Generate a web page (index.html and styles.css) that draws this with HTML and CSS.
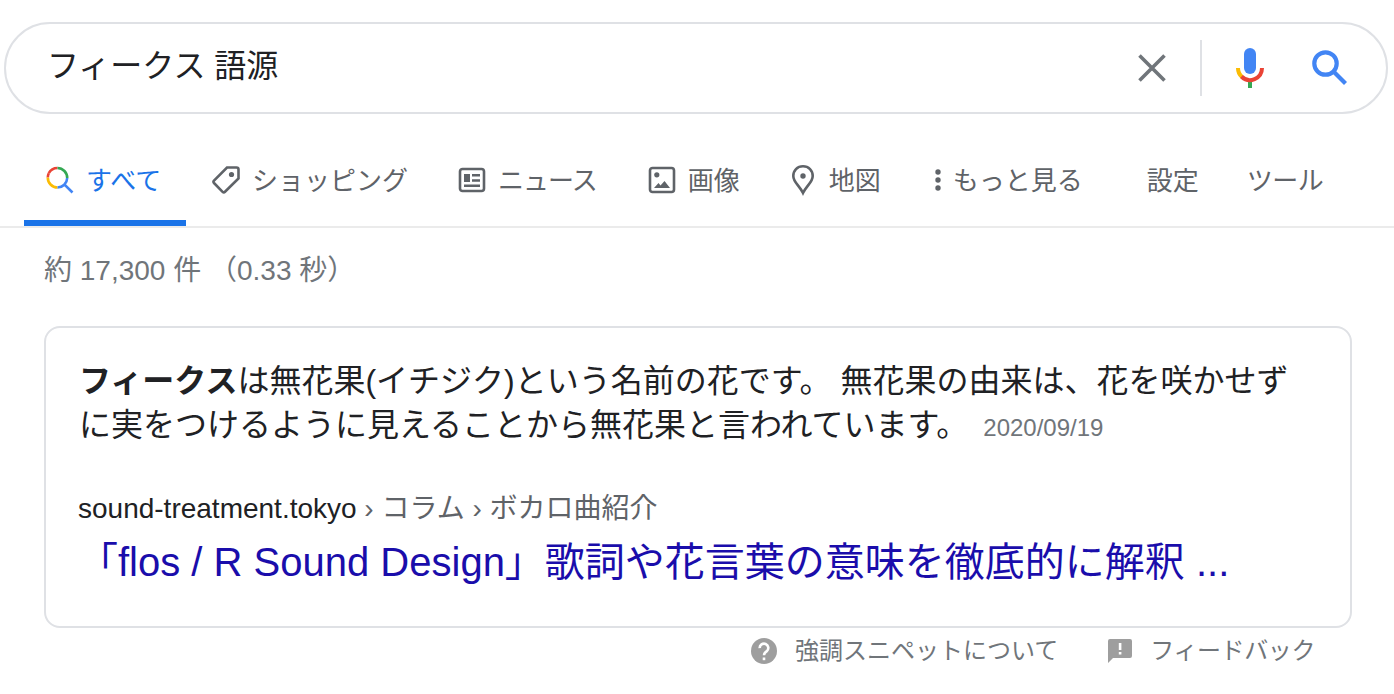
FILE: index.html
```html
<!DOCTYPE html>
<html lang="ja">
<head>
    <meta charset="UTF-8">
    <meta name="viewport" content="width=device-width, initial-scale=1.0">
    <title>フィークス 語源</title>
    <link rel="stylesheet" href="styles.css">
</head>
<body>
    <header class="search-box">
        <div class="search-query">フィークス 語源</div>
        <svg class="icon-clear" viewBox="0 0 28 28"><path d="M1.5 1.5L26.5 26.5M26.5 1.5L1.5 26.5"/></svg>
        <span class="search-divider"></span>
        <svg class="icon-mic" viewBox="0 0 28 40">
            <rect x="8" y="0" width="12" height="26" rx="6" fill="#4285f4"/>
            <path d="M12 33h4v7h-4z" fill="#34a853" stroke="none"/>
            <path d="M2 20a12 12 0 0 0 4 9" stroke="#fbbc04"/>
            <path d="M5.5 28.5A12 12 0 0 0 26 20" stroke="#ea4335"/>
        </svg>
        <svg class="icon-search" viewBox="0 0 36 36">
            <circle cx="13.5" cy="13.5" r="11.2"/>
            <path d="M22 22L33.5 33.5"/>
        </svg>
    </header>

    <nav class="tabs">
        <a class="tab active">
            <svg class="lens" viewBox="0 0 28 28">
                <path d="M2.8 7.2A9.8 9.8 0 0 1 11.5 2" stroke="#ea4335"/>
                <path d="M1.8 11.5A9.8 9.8 0 0 1 2.8 7.2" stroke="#ea4335"/>
                <path d="M11.5 21.5A9.8 9.8 0 0 1 1.8 11.5" stroke="#fbbc04"/>
                <path d="M11.5 2A9.8 9.8 0 0 1 21.2 12" stroke="#34a853"/>
                <path d="M21.2 12A9.8 9.8 0 0 1 11.5 21.5M18.3 18.3L26.5 26.5" stroke="#4285f4"/>
            </svg>
            <span>すべて</span>
        </a>
        <a class="tab tab-shopping">
            <svg viewBox="0 0 28 28">
                <path d="M15 1.5H24.5Q26.5 1.5 26.5 3.5V12.5L13 25.8Q11.8 27 10.6 25.8L2 17Q.9 15.8 2 14.6Z"/>
                <circle class="solid" cx="19.5" cy="8.5" r="2.6"/>
            </svg>
            <span>ショッピング</span>
        </a>
        <a class="tab tab-news">
            <svg viewBox="0 0 28 28">
                <rect x="2" y="3" width="24" height="22" rx="2.5"/>
                <path class="solid" d="M6 8h6v8H6zM14 8h8v2.5h-8zM14 13.2h8v2.5h-8zM6 18.5h16V21H6z"/>
            </svg>
            <span>ニュース</span>
        </a>
        <a class="tab tab-images">
            <svg viewBox="0 0 28 28">
                <rect x="2" y="2" width="24" height="24" rx="2.5"/>
                <circle class="solid" cx="8.8" cy="8.8" r="2.6"/>
                <path class="solid" d="M6 22L10.5 17L12.5 19.5L16.5 15L22 22Z"/>
            </svg>
            <span>画像</span>
        </a>
        <a class="tab tab-maps">
            <svg class="pin" viewBox="0 0 24 32">
                <path d="M12 2.3C6.2 2.3 2.3 6.6 2.3 12C2.3 18.2 8 21 12 29C16 21 21.7 18.2 21.7 12C21.7 6.6 17.8 2.3 12 2.3Z"/>
                <circle class="solid" cx="12" cy="12" r="2.7"/>
            </svg>
            <span>地図</span>
        </a>
        <a class="tab tab-more">
            <svg class="dots" viewBox="0 0 6 22">
                <circle class="solid" cx="3" cy="3" r="2.7"/>
                <circle class="solid" cx="3" cy="11" r="2.7"/>
                <circle class="solid" cx="3" cy="19" r="2.7"/>
            </svg>
            <span>もっと見る</span>
        </a>
        <a class="tab tab-settings"><span>設定</span></a>
        <a class="tab tab-tools"><span>ツール</span></a>
    </nav>

    <main class="results">
        <div class="result-stats">約 17,300 件 （0.33 秒）</div>

        <section class="snippet-card">
            <p class="snippet-text"><b>フィークス</b>は無花果(イチジク)という名前の花です。 無花果の由来は、花を咲かせず<br>に実をつけるように見えることから無花果と言われています。<span class="snippet-date">2020/09/19</span></p>
            <div class="result-url">sound-treatment.tokyo<span> › コラム › ボカロ曲紹介</span></div>
            <h3 class="result-title">「flos / R Sound Design」歌詞や花言葉の意味を徹底的に解釈 ...</h3>
        </section>

        <footer class="snippet-footer">
            <a>
                <svg class="icon-help" viewBox="0 0 26 26">
                    <circle cx="13" cy="13" r="13"/>
                    <path d="M8.7 10.2A4.3 4.3 0 1 1 15.8 13.2Q13 15 13 17.3"/>
                    <rect x="11.7" y="19.5" width="2.6" height="2.7"/>
                </svg>
                <span>強調スニペットについて</span>
            </a>
            <a>
                <svg class="icon-feedback" viewBox="0 0 24 24">
                    <path d="M2 0H22Q24 0 24 2V17Q24 19 22 19H5L0 24V2Q0 0 2 0Z"/>
                    <path class="mark" d="M10.8 4h2.6v7h-2.6zM10.8 13h2.6v2.6h-2.6z"/>
                </svg>
                <span class="feedback-label">フィードバック</span>
            </a>
        </footer>
    </main>
</body>
</html>
```
FILE: styles.css
```css
:root {
    --text: #202124;
    --muted: #5f6368;
    --light-muted: #70757a;
    --border: #dfe1e5;
    --blue: #1a73e8;
    --link: #1a0dab;
}

* {
    margin: 0;
    padding: 0;
    box-sizing: border-box;
}

body {
    background-color: #fff;
    color: var(--text);
    font-family: "Liberation Sans", "Noto Sans CJK JP", sans-serif;
    overflow: hidden;
}

svg {
    display: block;
    flex: none;
}

.search-box {
    display: flex;
    align-items: center;
    height: 92px;
    margin: 22px 6px 0 4px;
    padding: 0 38px 0 41px;
    border: 2px solid var(--border);
    border-radius: 46px;
}

.search-query {
    flex: 1;
    font-size: 32px;
    line-height: 44px;
    padding-bottom: 4px;
}

.icon-clear {
    width: 28px;
    height: 28px;
    stroke: #70757a;
    stroke-width: 3.6;
}

.search-divider {
    width: 2px;
    height: 56px;
    margin: 0 34px;
    background-color: var(--border);
}

.icon-mic {
    width: 28px;
    height: 40px;
    fill: none;
    stroke-width: 4;
}

.icon-mic rect {
    stroke: none;
}

.icon-search {
    width: 36px;
    height: 36px;
    margin-left: 48px;
    fill: none;
    stroke: #4285f4;
    stroke-width: 4.2;
}

.tabs {
    display: flex;
    height: 114px;
    padding-left: 24px;
    border-bottom: 2px solid #ebebeb;
    color: var(--muted);
    font-size: 26px;
    white-space: nowrap;
}

.tab {
    display: flex;
    align-items: center;
    gap: 12px;
    padding-top: 25px;
    border-bottom: 6px solid transparent;
}

.tab span {
    padding-bottom: 3px;
}

.tab svg {
    width: 28px;
    height: 28px;
    fill: none;
    stroke: currentColor;
    stroke-width: 2.6;
}

.tab .solid {
    fill: currentColor;
    stroke: none;
}

.tab.active {
    width: 162px;
    padding-left: 22px;
    color: var(--blue);
    border-bottom-color: var(--blue);
}

.tab-shopping {
    margin-left: 26px;
}

.tab-news {
    margin-left: 50px;
    letter-spacing: -1px;
}

.tab-images {
    margin-left: 51px;
}

.tab-maps {
    margin-left: 51px;
}

.tab svg.pin {
    width: 24px;
    height: 32px;
}

.tab.tab-maps {
    gap: 14px;
}

.tab-more {
    margin-left: 54px;
}

.tab svg.dots {
    width: 6px;
    height: 22px;
}

.tab-settings {
    margin-left: 64px;
}

.tab-tools {
    margin-left: 48px;
    letter-spacing: -0.5px;
}

.results {
    padding: 23px 42px 0 44px;
}

.result-stats {
    color: var(--light-muted);
    font-size: 28px;
    line-height: 40px;
}

.snippet-card {
    height: 302px;
    margin-top: 35px;
    padding: 31px 32px;
    border: 2px solid var(--border);
    border-radius: 16px;
    white-space: nowrap;
}

.snippet-text {
    padding-left: 1px;
    font-size: 32px;
    line-height: 44px;
}

.snippet-date {
    margin-left: 15px;
    color: var(--light-muted);
    font-size: 24px;
}

.result-url {
    margin-top: 39px;
    font-size: 28px;
    line-height: 40px;
}

.result-url span {
    color: var(--muted);
}

.result-title {
    margin-top: 7px;
    color: var(--link);
    font-size: 40px;
    font-weight: normal;
    line-height: 52px;
}

.snippet-footer {
    display: flex;
    justify-content: flex-end;
    gap: 50px;
    padding: 5px 37px 0 0;
    color: var(--light-muted);
    font-size: 24px;
    line-height: 36px;
}

.snippet-footer a {
    display: flex;
    align-items: center;
}

.snippet-footer svg {
    margin-right: 18px;
    fill: #9e9e9e;
}

.feedback-label {
    letter-spacing: -0.4px;
}

.icon-help {
    width: 26px;
    height: 26px;
}

.icon-help path {
    fill: none;
    stroke: #fff;
    stroke-width: 2.6;
}

.icon-help rect,
.icon-feedback .mark {
    fill: #fff;
}

.icon-feedback {
    width: 24px;
    height: 24px;
}
```
